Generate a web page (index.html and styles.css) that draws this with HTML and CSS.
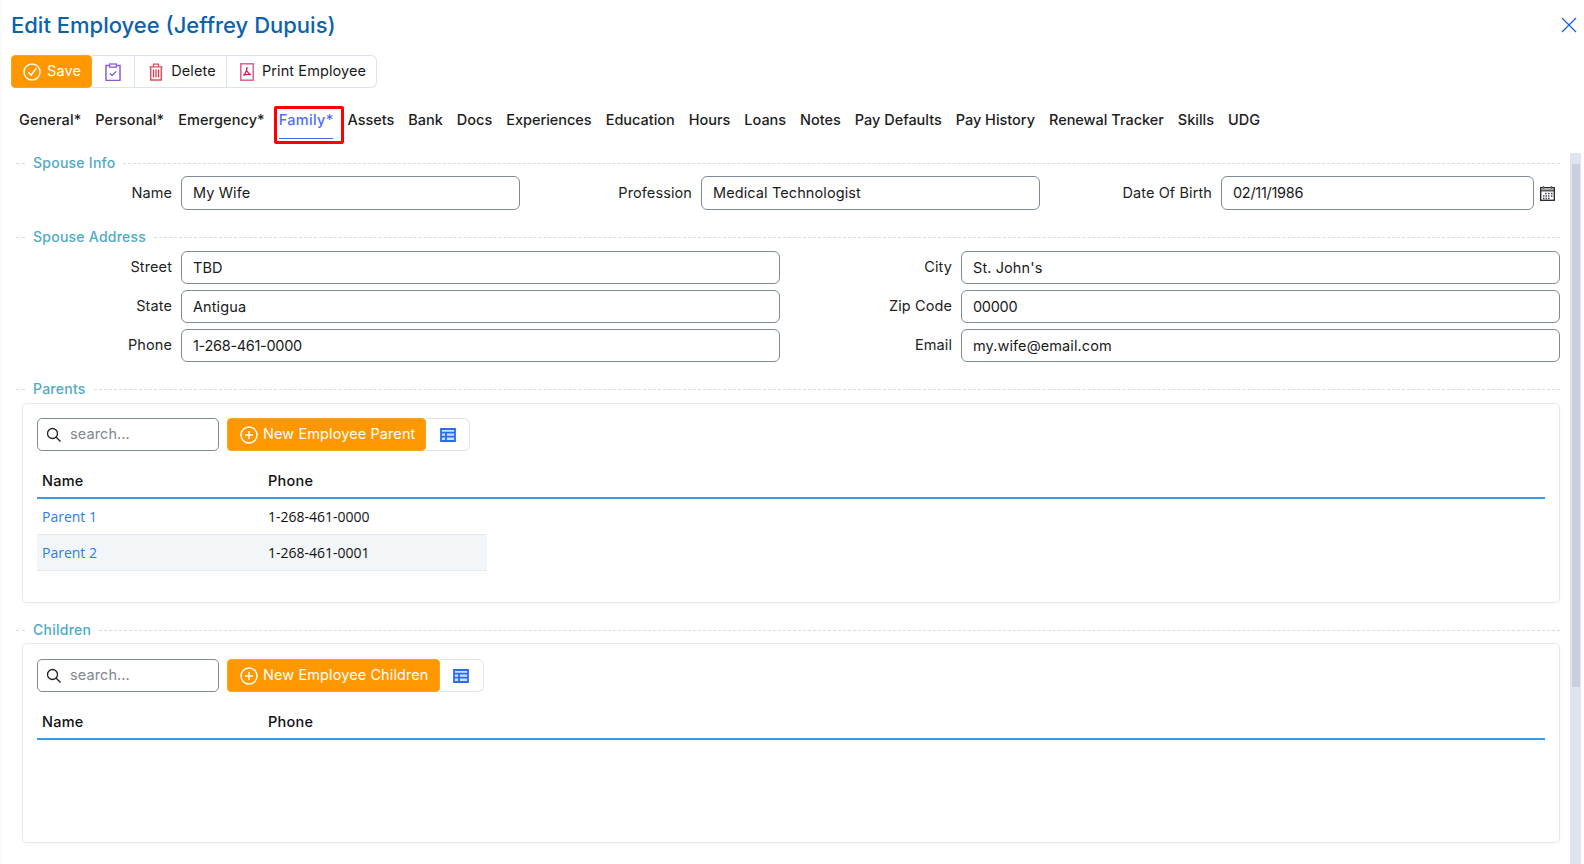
FILE: index.html
```html
<!DOCTYPE html>
<html lang="en">
<head>
<meta charset="utf-8">
<title>Edit Employee</title>
<link rel="stylesheet" href="styles.css">
</head>
<body>
<header class="head">
  <h1 class="title">Edit Employee (Jeffrey Dupuis)</h1>
  <svg class="close" viewBox="0 0 16 16"><path d="M1 1l14 14M15 1L1 15" fill="none" stroke="#1f5fe0" stroke-width="1.3"/></svg>
</header>
<div class="toolbar">
  <button class="btn primary save">
    <svg class="ic18" viewBox="0 0 18 18"><circle cx="9" cy="9" r="8" fill="none" stroke="#fff" stroke-width="1.400"/><path d="M5.300 9.200l2.800 2.900 5.200-6.800" fill="none" stroke="#fff" stroke-width="1.500"/></svg>
    <span>Save</span>
  </button>
  <button class="btn clip">
    <svg class="ic18" viewBox="0 0 16 18"><path d="M4.500 2.500H1v15h14v-15h-3.500" fill="none" stroke="#8a5fd0" stroke-width="1.500"/><rect x="4.600" y="1" width="6.800" height="3.200" fill="#fff" stroke="#8a5fd0" stroke-width="1.300"/><path d="M5 10.400l2.200 2 4-4" fill="none" stroke="#6a54c8" stroke-width="1.300"/></svg>
  </button>
  <button class="btn del">
    <svg class="ic18" viewBox="0 0 14 18"><path d="M.5 3.800h13M4.500 3.600V1.200h5v2.400" fill="none" stroke="#e0505e" stroke-width="1.300"/><path d="M1.700 4v13h10.600V4" fill="none" stroke="#e0505e" stroke-width="1.500"/><path d="M4.500 6.500v8M7 6.500v8M9.500 6.500v8" stroke="#d8404e" stroke-width="1.300"/></svg>
    <span>Delete</span>
  </button>
  <button class="btn print">
    <svg class="ic18" viewBox="0 0 14 18"><rect x=".8" y=".8" width="12.400" height="16.400" fill="none" stroke="#e0608a" stroke-width="1.500"/><path d="M7 4c0 4-1.500 6.500-3.500 8.500M7 8c1 2 2.500 3.200 4 3.600M3.500 12.500c2-1 4.500-1.300 7-.9" fill="none" stroke="#d8205f" stroke-width="1.300"/></svg>
    <span>Print Employee</span>
  </button>
</div>
<nav class="tabs">
  <a class="tab starred">General*</a>
  <a class="tab starred">Personal*</a>
  <a class="tab starred">Emergency*</a>
  <a class="tab active">Family*<span class="mark"></span></a>
  <a class="tab">Assets</a>
  <a class="tab">Bank</a>
  <a class="tab">Docs</a>
  <a class="tab">Experiences</a>
  <a class="tab">Education</a>
  <a class="tab">Hours</a>
  <a class="tab">Loans</a>
  <a class="tab">Notes</a>
  <a class="tab">Pay Defaults</a>
  <a class="tab">Pay History</a>
  <a class="tab">Renewal Tracker</a>
  <a class="tab">Skills</a>
  <a class="tab">UDG</a>
</nav>
<div class="body">
  <main class="form">
    <div class="legend first"><span>Spouse Info</span></div>
    <div class="grid info">
      <label>Name</label><div class="input">My Wife</div>
      <label>Profession</label><div class="input">Medical Technologist</div>
      <label>Date Of Birth</label><div class="input num">02/11/1986</div>
      <svg class="cal" viewBox="0 0 15 15"><rect x=".7" y="1.700" width="13.600" height="12.600" fill="#fff" stroke="#222" stroke-width="1.300"/><path d="M1 4.500h13" stroke="#555" stroke-width="2"/><path d="M3.500 0v3M11.500 0v3" stroke="#666" stroke-width="1.300"/><path d="M5 7.500h1.500M8 7.500h1.500M11 7.500h1.500M3 10h1.500M5.500 10H7M8 10h1.500M11 10h1.500M3 12.500h1.500M5.500 12.500H7M8 12.500h1.500" stroke="#445" stroke-width="1.300"/></svg>
    </div>
    <div class="legend"><span>Spouse Address</span></div>
    <div class="grid addr">
      <label>Street</label><div class="input h33">TBD</div>
      <label>City</label><div class="input h33">St. John's</div>
      <label>State</label><div class="input h33">Antigua</div>
      <label>Zip Code</label><div class="input h33 num">00000</div>
      <label>Phone</label><div class="input h33 num">1-268-461-0000</div>
      <label>Email</label><div class="input h33">my.wife@email.com</div>
    </div>
    <div class="legend"><span>Parents</span></div>
    <section class="panel">
      <div class="gridbar">
        <div class="search">
          <svg class="ic16" viewBox="0 0 16 16"><circle cx="6.500" cy="6.500" r="5" fill="none" stroke="#222" stroke-width="1.300"/><path d="M10.200 10.200l4.300 4.300" stroke="#222" stroke-width="1.300"/></svg>
          <span>search...</span>
        </div>
        <button class="btn primary add">
          <svg class="ic18" viewBox="0 0 18 18"><circle cx="9" cy="9" r="8" fill="none" stroke="#fff" stroke-width="1.400"/><path d="M9 5v8M5 9h8" stroke="#fff" stroke-width="1.500"/></svg>
          <span>New Employee Parent</span>
        </button>
        <button class="btn view"><svg class="ic16" viewBox="0 0 16 14"><path d="M1 1h14v12H1zM1 4.700h14M1 8.700h14M6 4.700v8.300" fill="#cfe0ff" stroke="#2a6cf0" stroke-width="1.800"/></svg></button>
      </div>
      <div class="thead"><span>Name</span><span>Phone</span></div>
      <div class="trow"><a>Parent 1</a><span>1-268-461-0000</span></div>
      <div class="trow alt"><a>Parent 2</a><span>1-268-461-0001</span></div>
    </section>
    <div class="legend"><span>Children</span></div>
    <section class="panel second">
      <div class="gridbar">
        <div class="search">
          <svg class="ic16" viewBox="0 0 16 16"><circle cx="6.500" cy="6.500" r="5" fill="none" stroke="#222" stroke-width="1.300"/><path d="M10.200 10.200l4.300 4.300" stroke="#222" stroke-width="1.300"/></svg>
          <span>search...</span>
        </div>
        <button class="btn primary add">
          <svg class="ic18" viewBox="0 0 18 18"><circle cx="9" cy="9" r="8" fill="none" stroke="#fff" stroke-width="1.400"/><path d="M9 5v8M5 9h8" stroke="#fff" stroke-width="1.500"/></svg>
          <span>New Employee Children</span>
        </button>
        <button class="btn view"><svg class="ic16" viewBox="0 0 16 14"><path d="M1 1h14v12H1zM1 4.700h14M1 8.700h14M6 4.700v8.300" fill="#cfe0ff" stroke="#2a6cf0" stroke-width="1.800"/></svg></button>
      </div>
      <div class="thead"><span>Name</span><span>Phone</span></div>
    </section>
  </main>
  <div class="scrollbar"><div class="thumb"></div></div>
</div>
</body>
</html>
```
FILE: styles.css
```css
* { box-sizing: border-box; }
html, body { margin: 0; height: 864px; overflow: hidden; }
body { background: #fff; font-family: Inter, "Liberation Sans", sans-serif; font-size: 14.500px; letter-spacing: .1px; color: #1a1a1a; display: flex; flex-direction: column; box-shadow: inset 2px 0 0 #fafafa; }
.head { height: 50px; padding: 0 7px 0 11px; display: flex; align-items: center; justify-content: space-between; flex: none; }
.title { margin: 0; font-size: 22px; font-weight: 500; color: #0b63ad; line-height: 50px; letter-spacing: 0; }
.close { width: 16px; height: 16px; }
.toolbar { margin: 5px 0 0 11px; display: flex; height: 33px; flex: none; }
.btn { font: inherit; letter-spacing: inherit; height: 100%; background: #fff; border: 1px solid #dde3ea; border-left: 0; color: #1a1a1a; display: flex; align-items: center; justify-content: center; gap: 6px; padding: 0; }
.btn span { padding-bottom: 2px; }
.primary { background: #ff9800; border: 1px solid #f5a524; border-radius: 4px; color: #fff; }
.ic18 { width: 18px; height: 18px; flex: none; }
.ic16 { width: 16px; height: 16px; flex: none; }
.save { width: 81px; padding-left: 1px; }
.clip { width: 43px; }
.del { width: 92px; padding-left: 2px; }
.print { width: 150px; padding-left: 1px; border-radius: 0 6px 6px 0; }
.tabs { margin-top: 18px; height: 38px; padding-left: 12px; display: flex; flex: none; }
.tab { position: relative; padding: 5px 7px 0; line-height: 18px; font-weight: 500; letter-spacing: -.02px; color: #1d1d1d; white-space: nowrap; }
.tab.starred { letter-spacing: .09px; }
.tab.active { color: #4f6ef7; letter-spacing: .3px; }
.tab.active::after { content: ""; position: absolute; left: 7px; right: 7px; bottom: 5px; height: 1px; background: #3f6ae8; }
.mark { position: absolute; left: 2px; right: -4px; top: 0; bottom: 0; border: 3px solid #f00; border-radius: 2px; }
.body { flex: 1; min-height: 0; display: flex; margin-top: 9px; }
.form { flex: 1; min-width: 0; padding: 0 10px 0 16px; }
.scrollbar { width: 11px; margin-right: 3px; background: #e0e4ee; padding: 11px 1px 0 2px; }
.thumb { height: 523px; background: #c9cfdc; }
.legend { height: 20px; margin-top: 17px; display: flex; align-items: center; }
.legend.first { margin-top: 0; }
.legend::before { content: ""; width: 9px; border-top: 1px dashed #d9dcdf; }
.legend::after { content: ""; flex: 1; border-top: 1px dashed #d9dcdf; }
.legend span { padding: 0 8px 2px; color: #4dabc4; font-weight: 500; font-size: 14px; letter-spacing: .25px; }
.grid { display: grid; align-items: center; }
.grid label { text-align: right; padding: 0 9px 2px 0; color: #222; }
.info { margin-top: 3px; grid-template-columns: 165px 339px 181px 339px 181px 313px 1fr; }
.addr { margin-top: 4px; grid-template-columns: 165px 599px 181px 1fr; row-gap: 6px; }
.input { height: 34px; border: 1px solid #7f8c96; border-radius: 6px; display: flex; align-items: center; padding: 0 11px 1px; color: #1a1a1a; background: #fff; }
.h33 { height: 33px; }
.num { letter-spacing: -.3px; }
.cal { width: 15px; height: 15px; margin-left: 6px; }
.panel { margin: 4px 0 0 6px; height: 200px; border: 1px solid #e6e8ea; border-radius: 5px; padding: 14px 14px 0; box-shadow: 0 1px 3px rgba(0,0,0,.03); }
.panel.second { margin-top: 3px; padding-top: 15px; }
.gridbar { display: flex; height: 33px; }
.search { width: 182px; border: 1px solid #7f8c96; border-radius: 5px; display: flex; align-items: center; padding: 0 8px; gap: 8px; color: #808890; }
.search span { padding-bottom: 2px; }
.add { margin-left: 8px; padding: 0 10px 0 12px; gap: 5px; white-space: nowrap; }
.view { width: 44px; border-radius: 0 6px 6px 0; }
.thead { margin-top: 14px; height: 34px; border-bottom: 2px solid #3a9be8; display: grid; grid-template-columns: 226px 1fr; padding-left: 5px; font-weight: 500; letter-spacing: .25px; color: #111; line-height: 32px; }
.trow { width: 450px; height: 36px; display: grid; grid-template-columns: 226px 1fr; padding-left: 5px; align-items: center; font-family: "Open Sans", sans-serif; font-size: 14px; letter-spacing: 0; color: #111; border-bottom: 1px solid #e6eaee; }
.trow a { color: #2b7cf0; }
.alt { background: #f3f6f9; }
```
